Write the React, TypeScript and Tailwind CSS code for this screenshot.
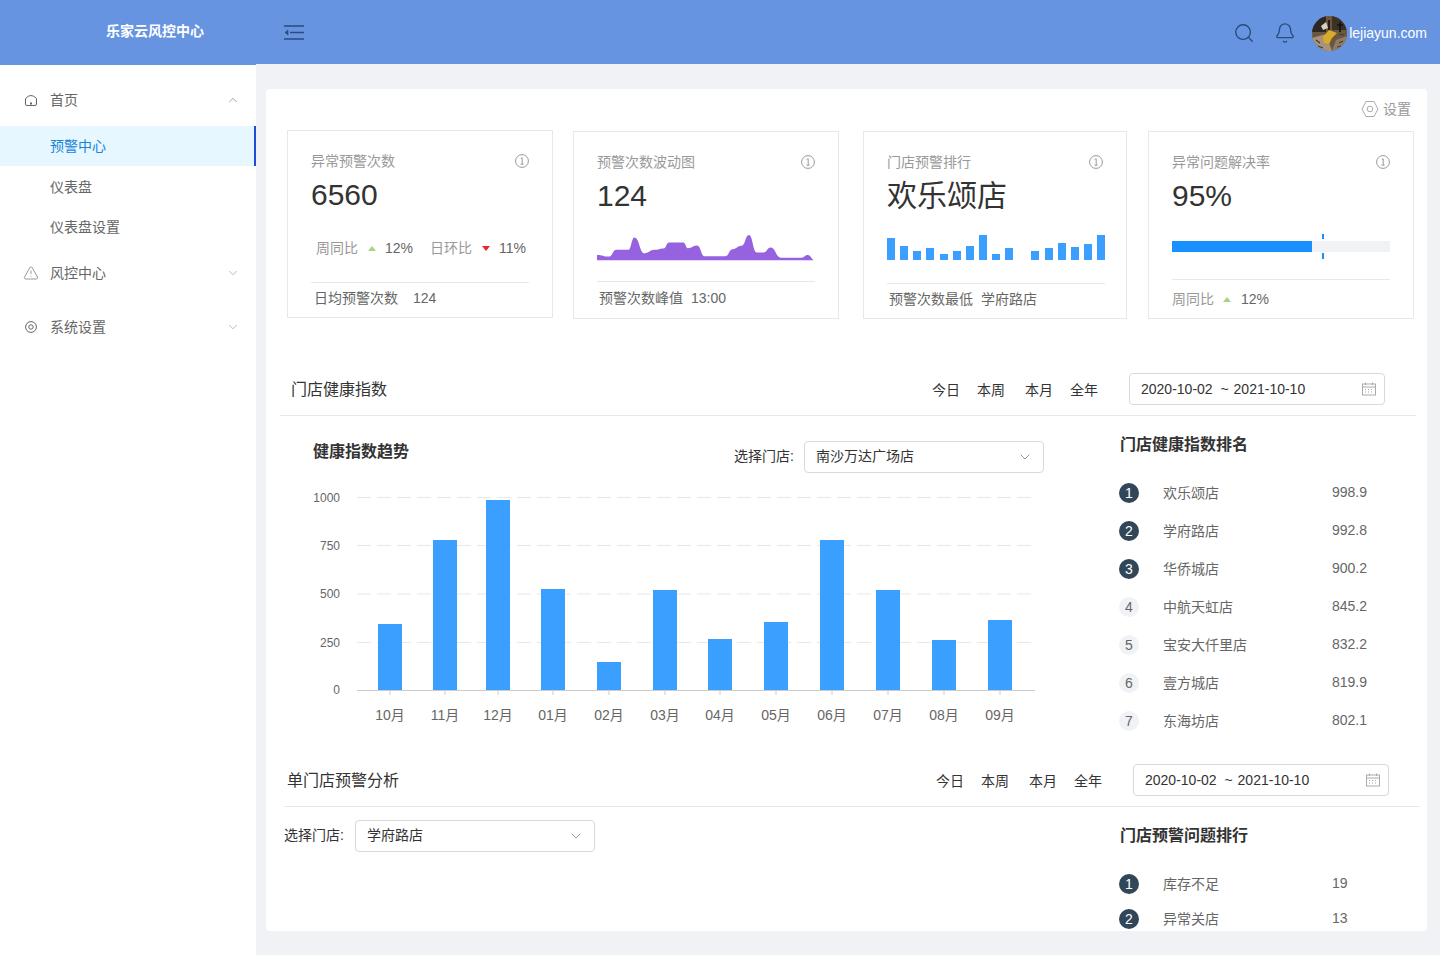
import React from 'react'
import { ChevronDown, ChevronUp, TriangleAlert, Search, Bell } from 'lucide-react'

const sparkPoints = [
    [872, 392], [905, 397], [925, 377], [958, 377], [975, 340], [1003, 387], [1030, 377], [1055, 373],
    [1070, 355], [1110, 355], [1122, 372], [1148, 364], [1168, 396], [1225, 396], [1245, 375], [1270, 365],
    [1290, 333], [1312, 385], [1330, 385], [1350, 370], [1378, 400], [1435, 400], [1452, 392], [1472, 408],
]

const miniBars = [22, 14, 9, 12, 6, 9, 14, 25, 6, 12, 0, 9, 12.5, 17, 13, 16.5, 25]

const chartBars = [
    { label: '10月', x: 378, top: 624 },
    { label: '11月', x: 433, top: 540 },
    { label: '12月', x: 486, top: 500 },
    { label: '01月', x: 541, top: 589 },
    { label: '02月', x: 597, top: 662 },
    { label: '03月', x: 653, top: 590 },
    { label: '04月', x: 708, top: 639 },
    { label: '05月', x: 764, top: 622 },
    { label: '06月', x: 820, top: 540 },
    { label: '07月', x: 876, top: 590 },
    { label: '08月', x: 932, top: 640 },
    { label: '09月', x: 988, top: 620 },
]

const gridLines = [
    { label: '1000', y: 497.5 },
    { label: '750', y: 545.5 },
    { label: '500', y: 594 },
    { label: '250', y: 642.5 },
]

const healthRank = [
    ['欢乐颂店', '998.9'],
    ['学府路店', '992.8'],
    ['华侨城店', '900.2'],
    ['中航天虹店', '845.2'],
    ['宝安大仟里店', '832.2'],
    ['壹方城店', '819.9'],
    ['东海坊店', '802.1'],
]

const problemRank = [
    ['库存不足', '19'],
    ['异常关店', '13'],
]

// smooth line through the points, closed along the bottom
const sparkPath = () => {
    let d = `M872 408 L${sparkPoints[0][0]} ${sparkPoints[0][1]}`
    for (let i = 1; i < sparkPoints.length; i++) {
        const [px, py] = sparkPoints[i - 1]
        const [x, y] = sparkPoints[i]
        const mid = (px + x) / 2
        d += ` C${mid} ${py} ${mid} ${y} ${x} ${y}`
    }
    return d + ' L1472 408 Z'
}

const InfoIcon = () => (
    <svg width="14" height="14" viewBox="0 0 14 14" fill="none" stroke="#999" strokeWidth="1">
        <circle cx="7" cy="7" r="6.4" />
        <path d="M5.8 4.4 L7.2 3.8 V10 M5.6 10.2 H8.6" />
    </svg>
)

const HexIcon = () => (
    <svg width="18" height="18" viewBox="0 0 18 18" fill="none" stroke="#aaa" strokeWidth="1">
        <path d="M5 1.5 H13 L17 9 L13 16.5 H5 L1 9 Z" />
        <circle cx="9" cy="9" r="2.8" />
    </svg>
)

const CalendarIcon = () => (
    <svg width="14" height="14" viewBox="0 0 14 14" fill="none" stroke="#aaa" strokeWidth="1">
        <rect x="0.5" y="2" width="13" height="11" />
        <path d="M0.5 5 H13.5 M3.5 0.5 V3 M10.5 0.5 V3" />
        <path d="M3 7.5 H5 M6 7.5 H8 M9 7.5 H11 M3 10 H5 M6 10 H8 M9 10 H11" strokeDasharray="1 1" />
    </svg>
)

const UpTriangle = () => (
    <span className="inline-block w-0 h-0 border-x-[4px] border-x-transparent border-b-[5px] border-b-[#a0d77f]" />
)

const DownTriangle = () => (
    <span className="inline-block w-0 h-0 border-x-[4px] border-x-transparent border-t-[5px] border-t-[#f5222d]" />
)

type StatCardProps = {
    title: string
    value: string
    footer: React.ReactNode
    children: React.ReactNode
    className: string
    titleClass?: string
    slotClass: string
    footerClass: string
}

const StatCard = ({ title, value, footer, children, className, titleClass = '', slotClass, footerClass }: StatCardProps) => (
    <div className={`border border-[#e8e8e8] px-[23px] pt-[19px] ${className}`}>
        <div className={`flex h-[22px] items-center justify-between text-sm text-[#999] ${titleClass}`}>
            <span>{title}</span>
            <InfoIcon />
        </div>
        <div className="h-[45px] text-[30px] leading-[46px] text-[#333]">{value}</div>
        <div className={slotClass}>{children}</div>
        <div className={`flex items-center border-t border-[#e8e8e8] text-sm text-[#666] ${footerClass}`}>{footer}</div>
    </div>
)

const DatePicker = () => (
    <div className="flex h-8 w-[256px] items-center justify-between rounded border border-[#d9d9d9] pl-[11px] pr-2 text-sm text-[#333]">
        <span className="whitespace-pre">2020-10-02  ~<span className="ml-[5px]">2021-10-10</span></span>
        <CalendarIcon />
    </div>
)

const SectionHeader = ({ title, className }: { title: string; className: string }) => (
    <div className={`flex items-center justify-between border-b border-[#e8e8e8] pb-2.5 pr-[31px] ${className}`}>
        <h3 className="pt-0.5 text-base text-[#333]">{title}</h3>
        <div className="flex items-center text-sm text-[#333]">
            <div className="flex pt-0.5">
                <span>今日</span>
                <span className="ml-[17px]">本周</span>
                <span className="ml-5">本月</span>
                <span className="ml-[17px]">全年</span>
            </div>
            <div className="ml-[31px]">
                <DatePicker />
            </div>
        </div>
    </div>
)

const StoreSelect = ({ value }: { value: string }) => (
    <div className="flex h-8 w-60 items-center justify-between rounded border border-[#d9d9d9] pl-[11px] pr-[10px] text-sm text-[#333]">
        <span className="pb-0.5">{value}</span>
        <ChevronDown size={16} strokeWidth={1.5} color="#999" />
    </div>
)

const RankList = ({ rows, rowClass }: { rows: string[][]; rowClass: string }) => (
    <div>
        {rows.map(([name, score], i) => (
            <div key={name} className={`flex items-center text-sm text-[#666] ${rowClass}`}>
                <span className={`mt-0.5 flex h-5 w-5 items-center justify-center rounded-full ${i < 3 ? 'bg-[#314659] text-white' : 'bg-[#f0f2f5] text-[#666]'}`}>
                    {i + 1}
                </span>
                <span className="ml-6 w-[169px] pt-0.5">{name}</span>
                <span>{score}</span>
            </div>
        ))}
    </div>
)

const Avatar = () => (
    <svg width="35" height="35" viewBox="0 0 35 35" className="shrink-0">
        <defs>
            <clipPath id="avatar-clip">
                <circle cx="17.5" cy="17.5" r="17.5" />
            </clipPath>
        </defs>
        <g clipPath="url(#avatar-clip)">
            <rect width="35" height="35" fill="#6b5640" />
            <rect x="0" y="0" width="14" height="16" fill="#2e2620" />
            <rect x="20" y="0" width="15" height="14" fill="#3a3128" />
            <path d="M0 22 L14 18 L20 35 H0 Z" fill="#a8937a" />
            <path d="M24 24 L35 20 V35 H20 Z" fill="#8f7c66" />
            <path d="M11 21 L17 14 L25 17 L20 22 L17 28 L12 27 Z" fill="#d9ab2a" />
            <path d="M9 10 L14 6 L16 12 L11 14 Z" fill="#d8cfc0" />
            <path d="M17 4 V14 M28 6 V16 M25 9 H31" stroke="#15110e" strokeWidth="1.6" />
            <path d="M4 24 L8 27 M6 30 L11 32 M27 27 L31 25 M25 31 L29 30 M27 18 L32 19" stroke="#4a3a2a" strokeWidth="1.2" />
        </g>
    </svg>
)

const Header = () => (
    <header className="flex h-16 shrink-0 items-start bg-[#6694e0]">
        <div className="relative z-10 flex h-[65px] w-64 shrink-0 items-start bg-[#6694e0] pl-[106px] pt-[21px] text-sm font-bold leading-5 text-white">
            乐家云风控中心
        </div>
        <div className="ml-7 mt-[25px]">
            <svg width="20" height="15" viewBox="0 0 20 15" fill="none" stroke="#2b4a7d" strokeWidth="1.6">
                <path d="M0 1 H20 M6 7.5 H20 M0 14 H20" />
                <path d="M4 5 L1 7.5 L4 10 Z" fill="#2b4a7d" strokeWidth="0.6" />
            </svg>
        </div>
        <div className="ml-auto flex h-16 items-center pr-[13px] pt-0.5">
            <Search size={22} strokeWidth={1.5} color="#2b4a7d" />
            <Bell size={22} strokeWidth={1.5} color="#2b4a7d" className="ml-[19px]" />
            <div className="ml-4">
                <Avatar />
            </div>
            <span className="ml-0.5 text-sm text-white">lejiayun.com</span>
        </div>
    </header>
)

const Sidebar = () => (
    <aside className="w-64 shrink-0 bg-white pt-3 text-sm text-[#666]">
        <div className="flex h-[50px] items-center pb-0.5 pl-6 pr-4">
            <svg width="14" height="14" viewBox="0 0 14 14" fill="none" stroke="#666" strokeWidth="1">
                <path d="M1.5 5.5 Q7 -0.5 12.5 5.5 V11 Q12.5 12.5 11 12.5 H3 Q1.5 12.5 1.5 11 Z" />
                <rect x="6" y="9.5" width="2" height="2" fill="#666" stroke="none" />
            </svg>
            <span className="ml-3">首页</span>
            <ChevronUp size={14} strokeWidth={1} color="#666" className="ml-auto" />
        </div>
        <div className="flex h-10 items-center border-r-2 border-[#1d4ed8] bg-[#e6f7ff] pl-[50px] text-[#1a84d8]">预警中心</div>
        <div className="mt-px flex h-10 items-center pl-[50px]">仪表盘</div>
        <div className="flex h-10 items-center pl-[50px]">仪表盘设置</div>
        <div className="mt-px flex h-[50px] items-center pl-[23px] pr-4">
            <TriangleAlert size={16} strokeWidth={1} color="#666" />
            <span className="ml-[11px]">风控中心</span>
            <ChevronDown size={14} strokeWidth={1} color="#888" className="ml-auto" />
        </div>
        <div className="mt-1 flex h-[50px] items-center pl-[25px] pr-4">
            <svg width="12" height="12" viewBox="0 0 12 12" fill="none" stroke="#666" strokeWidth="1">
                <circle cx="6" cy="6" r="5.4" />
                <circle cx="6" cy="6" r="2.2" />
            </svg>
            <span className="ml-[13px]">系统设置</span>
            <ChevronDown size={14} strokeWidth={1} color="#888" className="ml-auto" />
        </div>
    </aside>
)

const StatCards = () => (
    <div className="mt-2.5 flex items-start pl-[21px]">
        <StatCard
            title="异常预警次数"
            value="6560"
            className="h-[188px] w-[266px]"
            slotClass="h-[65px]"
            footerClass="h-[31px]"
            footer={<span className="pl-[3px]">日均预警次数<span className="ml-[15px]">124</span></span>}
        >
            <div className="flex h-full items-center pb-[3px] pl-[5px] text-sm">
                <span className="text-[#999]">周同比</span>
                <span className="ml-[10px] flex"><UpTriangle /></span>
                <span className="ml-[9px] text-[#666]">12%</span>
                <span className="ml-[17px] text-[#999]">日环比</span>
                <span className="ml-[10px] flex"><DownTriangle /></span>
                <span className="ml-[9px] text-[#666]">11%</span>
            </div>
        </StatCard>
        <StatCard
            title="预警次数波动图"
            value="124"
            className="ml-5 mt-px h-[188px] w-[266px]"
            slotClass="h-[63px]"
            footerClass="h-[33px]"
            footer={<span className="pl-[2px]">预警次数峰值<span className="ml-[8px]">13:00</span></span>}
        >
            <div className="flex h-full items-end pb-5">
                <svg width="218" height="27" viewBox="872 330 600 80" preserveAspectRatio="none">
                    <path d={sparkPath()} fill="#9762e0" />
                </svg>
            </div>
        </StatCard>
        <StatCard
            title="门店预警排行"
            value="欢乐颂店"
            className="ml-6 mt-px h-[188px] w-[264px] pr-[21px]"
            titleClass="pr-0.5"
            slotClass="h-[65px]"
            footerClass="h-[31px]"
            footer={<span className="pl-[2px]">预警次数最低<span className="ml-2">学府路店</span></span>}
        >
            <div className="flex h-full items-end justify-between pb-[23px]">
                {miniBars.map((h, i) => (
                    <div key={i} className="w-2 bg-[#3a9fff]" style={{ height: h }} />
                ))}
            </div>
        </StatCard>
        <StatCard
            title="异常问题解决率"
            value="95%"
            className="ml-[21px] mt-px h-[188px] w-[266px]"
            slotClass="h-[61px]"
            footerClass="h-[39px]"
            footer={
                <span className="flex items-center">
                    <span className="text-[#999]">周同比</span>
                    <span className="ml-[9px] flex"><UpTriangle /></span>
                    <span className="ml-[10px]">12%</span>
                </span>
            }
        >
            <div className="relative h-full pt-[23px]">
                <div className="h-[11px] w-full bg-[#f0f2f5]">
                    <div className="h-full w-[140px] bg-[#1890ff]" />
                </div>
                <div className="absolute left-[150px] top-[16px] h-[25px] w-[2px] bg-[linear-gradient(to_bottom,#1890ff_0,#1890ff_5px,transparent_5px,transparent_19px,#1890ff_19px,#1890ff_25px)]" />
            </div>
        </StatCard>
    </div>
)

const HealthChart = () => (
    <svg width="750" height="250" viewBox="300 485 750 250" className="ml-[34px] mt-3">
        {gridLines.map(g => (
            <g key={g.label}>
                <line x1="357" x2="1035" y1={g.y} y2={g.y} stroke="#e8e8e8" strokeDasharray="14 6" />
                <text x="340" y={g.y + 4} textAnchor="end" fontSize="12" fill="#666">{g.label}</text>
            </g>
        ))}
        <text x="340" y="694" textAnchor="end" fontSize="12" fill="#666">0</text>
        {chartBars.map(b => (
            <g key={b.label}>
                <rect x={b.x} y={b.top} width="24" height={690 - b.top} fill="#3a9fff" />
                <line x1={b.x + 12} x2={b.x + 12} y1="690" y2="695" stroke="#ccc" />
                <text x={b.x + 12} y="720" textAnchor="middle" fontSize="14" fill="#666">{b.label}</text>
            </g>
        ))}
        <line x1="357" x2="1035" y1="690.5" y2="690.5" stroke="#ccc" />
    </svg>
)

export default function App() {
    return (
        <div className="flex h-[955px] flex-col overflow-hidden bg-[#f0f2f5] font-['Liberation_Sans','Noto_Sans_CJK_SC',sans-serif]">
            <Header />
            <div className="flex flex-1">
                <Sidebar />
                <main className="pl-2.5 pt-[25px]">
                    <div className="h-[842px] w-[1161px] overflow-hidden rounded bg-white">
                        <div className="flex h-[31px] items-center justify-end pr-4 pt-[9px] text-sm text-[#999]">
                            <HexIcon />
                            <span className="ml-1">设置</span>
                        </div>
                        <StatCards />

                        <SectionHeader title="门店健康指数" className="ml-3.5 mt-[54px] w-[1136px] pl-[11px]" />
                        <div className="flex h-[348px]">
                            <div className="w-[853px]">
                                <div className="mt-[25px] flex h-8 items-center justify-between pl-[47px] pr-[75px]">
                                    <h4 className="mb-2.5 text-base font-bold text-[#333]">健康指数趋势</h4>
                                    <div className="flex items-center text-sm text-[#333]">
                                        <span className="mr-2.5 pb-0.5">选择门店:</span>
                                        <StoreSelect value="南沙万达广场店" />
                                    </div>
                                </div>
                                <HealthChart />
                            </div>
                            <div className="pl-px pt-[17px]">
                                <h4 className="text-base font-bold leading-6 text-[#333]">门店健康指数排名</h4>
                                <div className="-ml-px mt-4">
                                    <RankList rows={healthRank} rowClass="h-[38px]" />
                                </div>
                            </div>
                        </div>

                        <SectionHeader title="单门店预警分析" className="ml-[18px] w-[1136px] pl-[3px]" />
                        <div className="flex">
                            <div className="w-[853px] pl-[18px] pt-[13px]">
                                <div className="flex items-center text-sm text-[#333]">
                                    <span className="mr-[11px] pb-0.5">选择门店:</span>
                                    <StoreSelect value="学府路店" />
                                </div>
                            </div>
                            <div className="pl-px pt-[17px]">
                                <h4 className="text-base font-bold leading-6 text-[#333]">门店预警问题排行</h4>
                                <div className="-ml-px mt-[17px]">
                                    <RankList rows={problemRank} rowClass="h-[35px]" />
                                </div>
                            </div>
                        </div>
                    </div>
                </main>
            </div>
        </div>
    )
}
